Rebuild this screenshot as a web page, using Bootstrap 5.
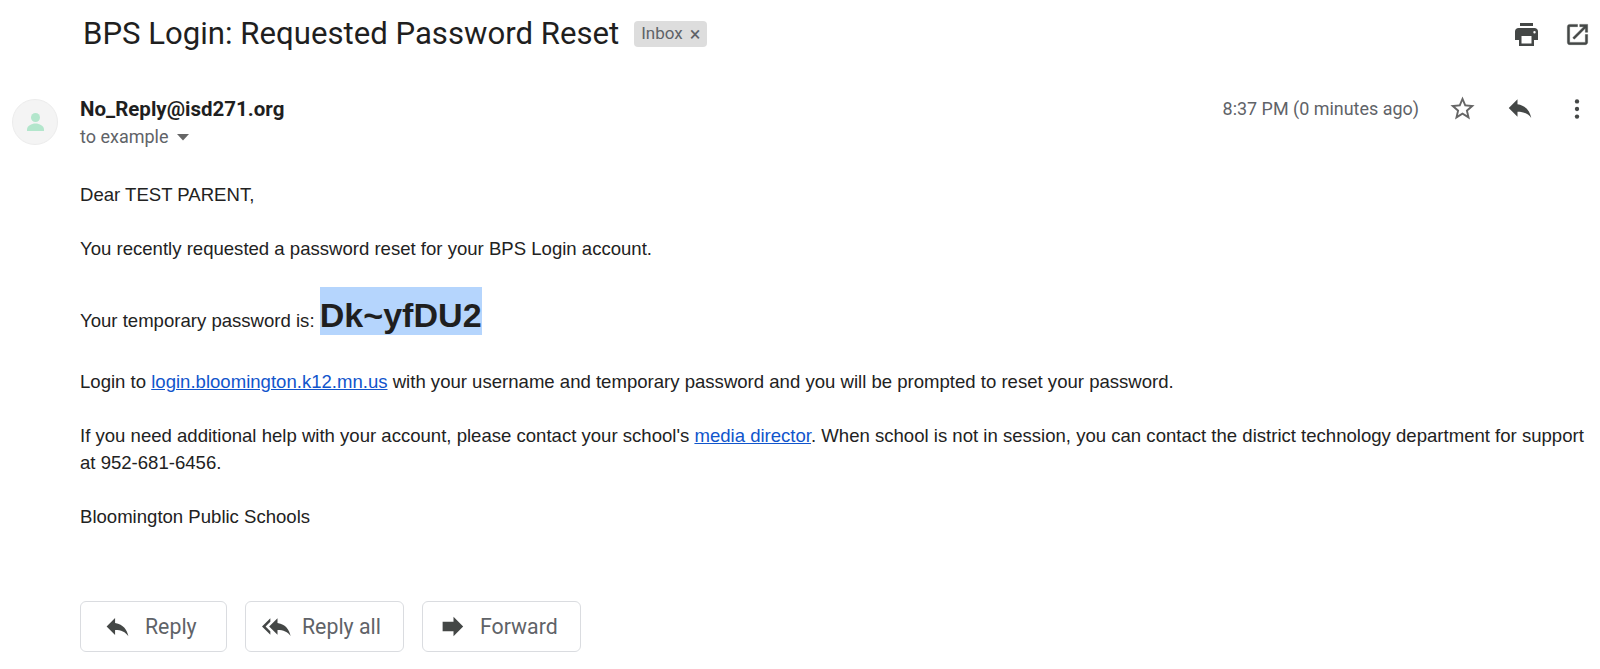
<!DOCTYPE html>
<html>
<head>
    <title>BPS Login: Requested Password Reset</title>
    <meta charset="UTF-8">
    <meta name="viewport" content="width=device-width, initial-scale=1">
    <link href="https://cdn.jsdelivr.net/npm/bootstrap@5.3.0/dist/css/bootstrap.min.css" rel="stylesheet">
    <style>
        body { background: #fff; font-family: Roboto, "Liberation Sans", sans-serif; overflow: hidden; }
        .mail-page { height: 669px; }
        .subject-row { height: 68px; padding-left: 83px; padding-right: 9px; }
        .subject-text { font-size: 31.15px; font-weight: 400; color: #1f1f1f; margin: 0; line-height: 36px; }
        .inbox-chip { background: #dddddd; color: #5f6368; font-size: 17px; border-radius: 4px; height: 26px; padding: 0 7px; margin-left: 15px; margin-top: 0; }
        .chip-x { font-size: 20px; margin-left: 7px; line-height: 1; }
        .subject-tools { gap: 26px; }
        .head-row { padding-left: 12px; padding-right: 10px; height: 90px; }
        .avatar-circle { width: 46px; height: 46px; background: #f4f4f4; border: 1px solid #ececec; border-radius: 50%; margin-top: 31px; margin-right: 22px; }
        .sender-box { padding-top: 30px; }
        .sender-name { font-size: 20.5px; font-weight: 700; color: #1f1f1f; line-height: 22px; }
        .to-line { font-size: 18px; color: #5f6368; line-height: 20px; margin-top: 7px; }
        .meta-box { padding-top: 27px; }
        .time-text { font-size: 17.95px; color: #5f6368; line-height: 26px; margin-top: 1px; margin-right: 29px; }
        .meta-star { margin-top: -1px; margin-right: 28px; }
        .meta-reply { margin-top: -2px; margin-right: 29px; }
        .meta-dots { margin-top: 1px; }
        .mail-body { padding-left: 80px; padding-right: 10px; font-family: "Liberation Sans", Arial, sans-serif; font-size: 18.57px; line-height: 27px; color: #222; margin-top: 23px; }
        .mail-body a { color: #1155cc; }
        .pw-line { margin: 28px 0 22px; line-height: 50px; }
        .pw-mark { font-size: 34.1px; font-weight: 700; background: #b5d5fd; color: #1f1f1f; padding: 9px 0 1px; }
        .mail-actions { padding-left: 80px; margin-top: 71px; gap: 18px; }
        .act-btn { height: 51px; border: 1px solid #dadce0; border-radius: 6px; background: #fff; color: #5f6368; font-size: 21.3px; padding: 0; }
        .act-reply { width: 147px; padding-left: 22px; gap: 13px; }
        .act-all { width: 159px; padding-left: 16px; gap: 9px; }
        .act-fwd { width: 159px; padding-left: 16px; gap: 12px; }
    </style>
</head>
<body>
<div class="mail-page">

    <!-- Subject row -->
    <div class="subject-row d-flex align-items-center">
        <h2 class="subject-text">BPS Login: Requested Password Reset</h2>
        <span class="inbox-chip d-inline-flex align-items-center">Inbox<span class="chip-x">&#215;</span></span>
        <div class="subject-tools ms-auto d-flex align-items-center">
            <svg width="23" height="23" viewBox="0 0 23 23" fill="#444746"><path d="M5 0h13v3H5zM3.5 5h16C21.5 5 23 6.500 23 8.500V17h-4v6H4v-6H0V8.500C0 6.500 1.500 5 3.500 5zM6.500 13v7.500h10V13zM19.500 8a1.200 1.200 0 1 0 0 2.400 1.200 1.200 0 0 0 0-2.400z"/></svg>
            <svg width="27" height="27" viewBox="0 0 24 24" fill="#444746" stroke="#444746" stroke-width=".4"><path d="M19 19H5V5h7V3H5a2 2 0 0 0-2 2v14a2 2 0 0 0 2 2h14c1.100 0 2-.9 2-2v-7h-2v7zM14 3v2h3.590l-9.830 9.830 1.410 1.410L19 6.410V10h2V3h-7z"/></svg>
        </div>
    </div>

    <!-- Sender row -->
    <div class="head-row d-flex">
        <div class="avatar-circle d-flex align-items-center justify-content-center">
            <svg width="17" height="18" viewBox="0 0 17 18" fill="#b3e6cc"><circle cx="8.5" cy="4.500" r="4.500"/><path d="M0 16.500C0 13 4.500 10.500 8.500 10.500S17 13 17 16.500V18H0z"/></svg>
        </div>
        <div class="sender-box">
            <div class="sender-name">No_Reply@isd271.org</div>
            <div class="to-line d-flex align-items-center">to example
                <svg class="ms-2" width="12" height="7" viewBox="0 0 12 7" fill="#666"><path d="M0 0h12L6 6.500z"/></svg>
            </div>
        </div>
        <div class="meta-box ms-auto d-flex align-items-start">
            <span class="time-text">8:37 PM (0 minutes ago)</span>
            <svg class="meta-star" width="29" height="29" viewBox="0 0 24 24" fill="#666"><path d="M22 9.240l-7.190-.620L12 2 9.190 8.630 2 9.240l5.460 4.730L5.820 21 12 17.270 18.180 21l-1.630-7.030L22 9.240zM12 15.400l-3.760 2.270 1-4.280-3.320-2.880 4.380-.380L12 6.100l1.710 4.040 4.380.380-3.320 2.880 1 4.280L12 15.400z"/></svg>
            <svg class="meta-reply" width="30" height="30" viewBox="0 0 24 24" fill="#444746"><path d="M10 9V5l-7 7 7 7v-4.100c5 0 8.500 1.600 11 5.100-1-5-4-10-11-11z"/></svg>
            <svg class="meta-dots" width="26" height="26" viewBox="0 0 24 24" fill="#444746"><circle cx="12" cy="5" r="2"/><circle cx="12" cy="12" r="2"/><circle cx="12" cy="19" r="2"/></svg>
        </div>
    </div>

    <!-- Message body -->
    <div class="mail-body">
        <div>Dear TEST PARENT,</div>
        <br>
        <div>You recently requested a password reset for your BPS Login account.</div>
        <div class="pw-line">Your temporary password is: <span class="pw-mark">Dk~yfDU2</span></div>
        <div>Login to <a href="#">login.bloomington.k12.mn.us</a> with your username and temporary password and you will be prompted to reset your password.</div>
        <br>
        <div>If you need additional help with your account, please contact your school's <a href="#">media director</a>. When school is not in session, you can contact the district technology department for support at 952-681-6456.</div>
        <br>
        <div>Bloomington Public Schools</div>
    </div>

    <!-- Reply buttons -->
    <div class="mail-actions d-flex">
        <button type="button" class="act-btn act-reply btn d-flex align-items-center">
            <svg width="29" height="29" viewBox="0 0 24 24" fill="#444746"><path d="M10 9V5l-7 7 7 7v-4.100c5 0 8.500 1.600 11 5.100-1-5-4-10-11-11z"/></svg>Reply
        </button>
        <button type="button" class="act-btn act-all btn d-flex align-items-center">
            <svg width="31" height="29" viewBox="0 0 26 24" fill="#444746"><path d="M7 8V5l-7 7 7 7v-3l-4-4 4-4zm6 1V5l-7 7 7 7v-4.100c5 0 8.500 1.600 11 5.100-1-5-4-10-11-11z"/></svg>Reply all
        </button>
        <button type="button" class="act-btn act-fwd btn d-flex align-items-center">
            <svg width="29" height="29" viewBox="0 0 24 24" fill="#444746"><path d="M3 8h9V4l8 8-8 8v-4H3z"/></svg>Forward
        </button>
    </div>
</div>
<script src="https://cdn.jsdelivr.net/npm/bootstrap@5.3.0/dist/js/bootstrap.bundle.min.js"></script>
</body>
</html>
